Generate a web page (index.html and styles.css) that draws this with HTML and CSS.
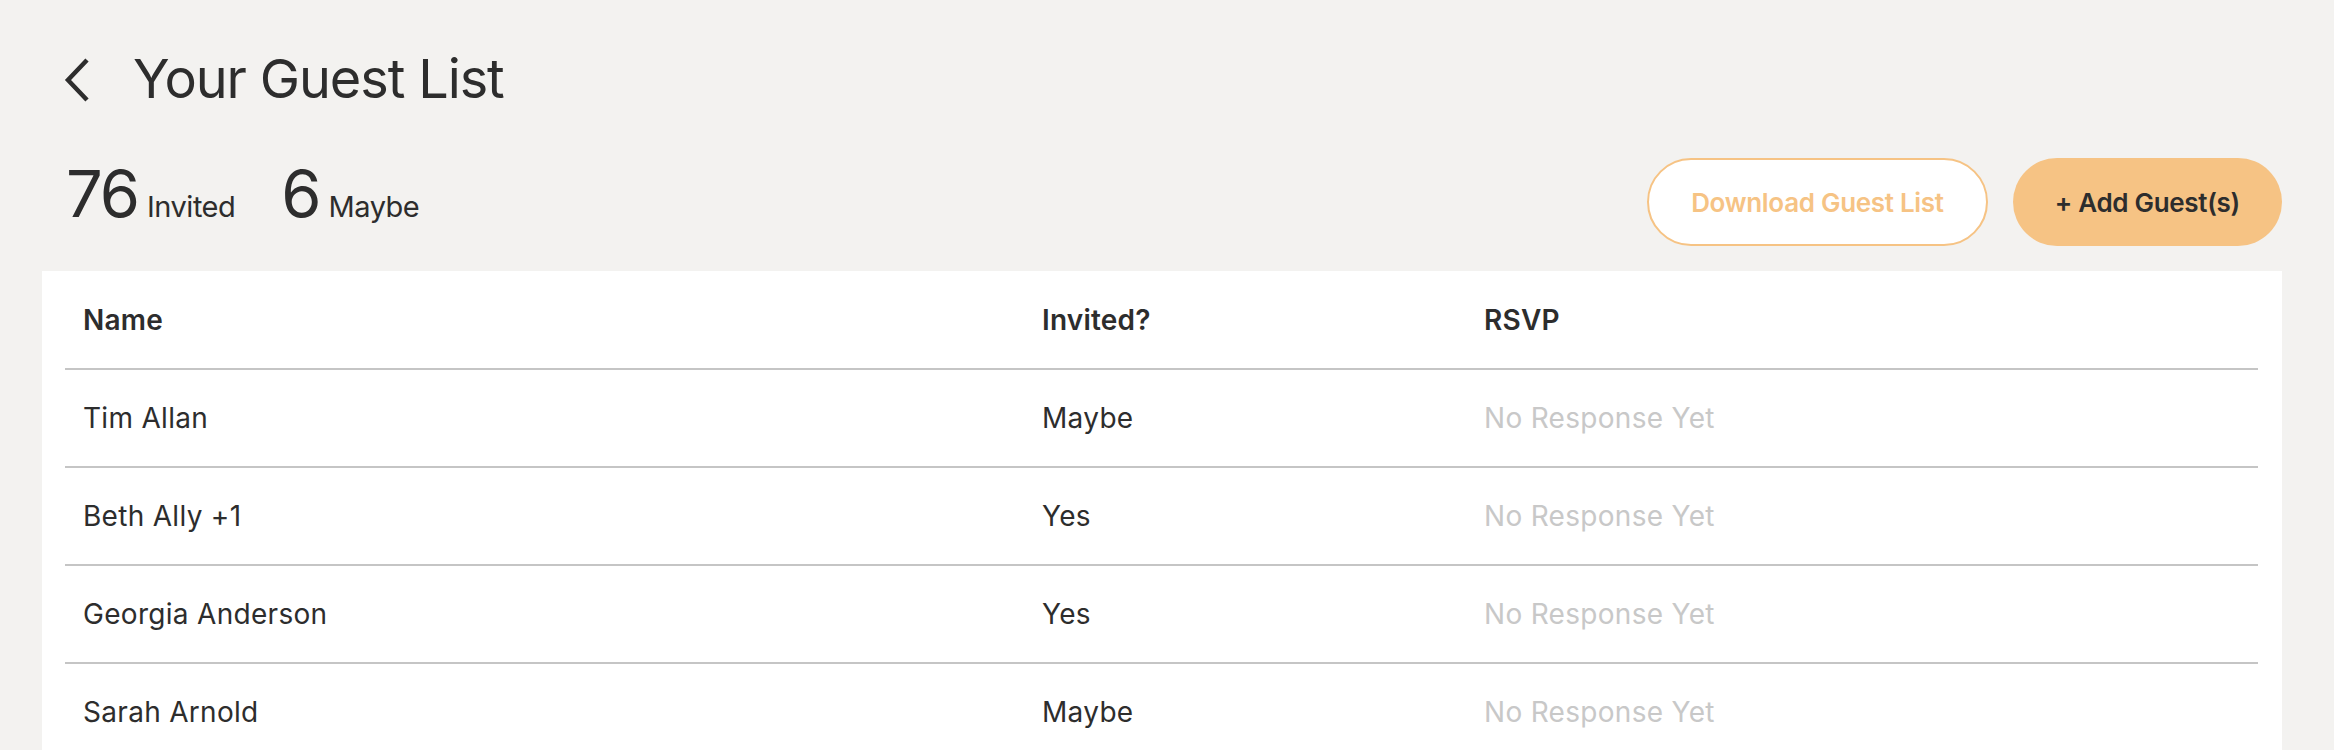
FILE: index.html
```html
<!DOCTYPE html>
<html lang="en">
<head>
    <meta charset="UTF-8">
    <meta name="viewport" content="width=device-width, initial-scale=1.0">
    <title>Your Guest List</title>
    <link rel="stylesheet" href="styles.css">
</head>
<body>
    <div id="page">
        <div class="top">
            <a class="back" href="#" aria-label="Back">
                <svg width="26" height="46" viewBox="0 0 26 46">
                    <polyline points="23,3 4,23 23,43" fill="none" stroke="#2d2d2d" stroke-width="4.5" stroke-linecap="butt" stroke-linejoin="miter"/>
                </svg>
            </a>
            <h1>Your Guest List</h1>
        </div>

        <div class="summary">
            <div class="stats">
                <div class="stat"><span class="count">76</span><span class="label">Invited</span></div>
                <div class="stat"><span class="count">6</span><span class="label">Maybe</span></div>
            </div>
            <div class="actions">
                <button class="btn btn-outline">Download Guest List</button>
                <button class="btn btn-fill">+ Add Guest(s)</button>
            </div>
        </div>

        <div class="panel">
            <table class="guests">
                <thead>
                    <tr>
                        <th class="col-name">Name</th>
                        <th class="col-invited">Invited?</th>
                        <th>RSVP</th>
                    </tr>
                </thead>
                <tbody>
                    <tr>
                        <td>Tim Allan</td>
                        <td>Maybe</td>
                        <td class="muted">No Response Yet</td>
                    </tr>
                    <tr>
                        <td>Beth Ally +1</td>
                        <td>Yes</td>
                        <td class="muted">No Response Yet</td>
                    </tr>
                    <tr>
                        <td>Georgia Anderson</td>
                        <td>Yes</td>
                        <td class="muted">No Response Yet</td>
                    </tr>
                    <tr>
                        <td>Sarah Arnold</td>
                        <td>Maybe</td>
                        <td class="muted">No Response Yet</td>
                    </tr>
                </tbody>
            </table>
        </div>
    </div>
</body>
</html>
```

FILE: styles.css
```css
body {
    font-family: Inter, "Liberation Sans", sans-serif;
    background-color: #f3f2f0;
    color: #2d2d2d;
    margin: 0;
}

#page {
    padding: 0 52px 0 42px;
}

.top {
    height: 158px;
    display: flex;
    align-items: center;
    padding-left: 22px;
}

.back {
    display: flex;
    margin-right: 43px;
    margin-top: 2px;
}

h1 {
    margin: 0;
    font-size: 54px;
    font-weight: 400;
    line-height: 1;
    letter-spacing: -1.1px;
}

.summary {
    height: 88px;
    display: flex;
    justify-content: space-between;
    align-items: center;
    margin-bottom: 25px;
}

.stats {
    align-self: flex-start;
    display: flex;
    gap: 46px;
    padding-left: 24px;
    padding-top: 3px;
}

.stat {
    display: flex;
    align-items: baseline;
    gap: 9px;
}

.count {
    font-size: 65px;
    line-height: 1;
    letter-spacing: -2px;
}

.label {
    font-size: 29px;
    letter-spacing: -0.5px;
}

.actions {
    display: flex;
    gap: 25px;
}

.btn {
    height: 88px;
    padding: 0 42px;
    border-radius: 44px;
    font-family: inherit;
    font-size: 26px;
    font-weight: 600;
    letter-spacing: -0.3px;
    cursor: pointer;
}

.btn-outline {
    background-color: #fff;
    border: 2px solid #f6c384;
    color: #f6c384;
}

.btn-fill {
    background-color: #f6c384;
    border: none;
    color: #2d2d2d;
}

.panel {
    background-color: #fff;
    padding: 0 24px 0 23px;
}

.guests {
    width: 100%;
    border-collapse: collapse;
}

.guests th, .guests td {
    text-align: left;
    padding: 0 18px;
    font-size: 28px;
    border-bottom: 2px solid #c5c5c5;
}

.guests th {
    height: 97px;
    font-weight: 600;
    letter-spacing: 0.2px;
}

.guests td {
    height: 96px;
    font-weight: 400;
    letter-spacing: 0.3px;
}

.col-name {
    width: 923px;
}

.col-invited {
    width: 406px;
}

.muted {
    color: #c8c8c8;
}
```
